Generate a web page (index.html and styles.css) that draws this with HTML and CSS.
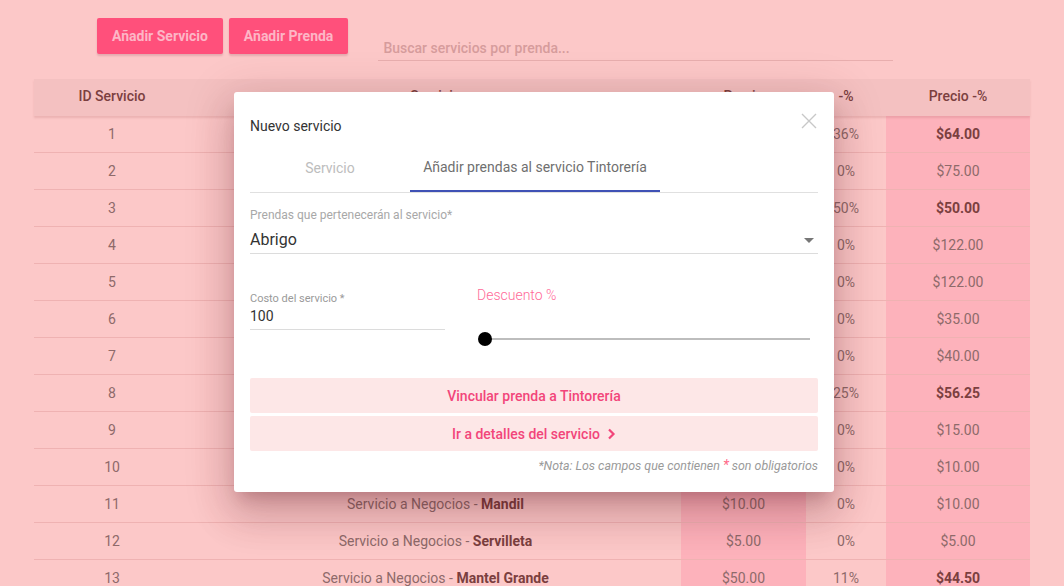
FILE: index.html
```html
<!DOCTYPE html>
<html lang="es">
<head>
<meta charset="utf-8">
<title>Servicios</title>
<link rel="stylesheet" href="styles.css">
</head>
<body>
<div class="page">
  <div class="toolbar">
    <button class="btn-add">Añadir Servicio</button>
    <button class="btn-add">Añadir Prenda</button>
    <div class="search"><span class="placeholder">Buscar servicios por prenda...</span></div>
  </div>
  <div class="table">
    <div class="row head">
      <div class="c c-id">ID Servicio</div>
      <div class="c c-srv">Servicio</div>
      <div class="c c-pr">Precio</div>
      <div class="c c-pc">-%</div>
      <div class="c c-fin">Precio -%</div>
    </div>
    <div class="row"><div class="c c-id">1</div><div class="c c-srv">Tintorería - <b>Traje</b></div><div class="c c-pr hl">$100.00</div><div class="c c-pc">36%</div><div class="c c-fin hl"><b>$64.00</b></div></div>
    <div class="row"><div class="c c-id">2</div><div class="c c-srv">Tintorería - <b>Vestido</b></div><div class="c c-pr hl">$75.00</div><div class="c c-pc">0%</div><div class="c c-fin hl">$75.00</div></div>
    <div class="row"><div class="c c-id">3</div><div class="c c-srv">Tintorería - <b>Abrigo</b></div><div class="c c-pr hl">$100.00</div><div class="c c-pc">50%</div><div class="c c-fin hl"><b>$50.00</b></div></div>
    <div class="row"><div class="c c-id">4</div><div class="c c-srv">Lavandería - <b>Edredón</b></div><div class="c c-pr hl">$122.00</div><div class="c c-pc">0%</div><div class="c c-fin hl">$122.00</div></div>
    <div class="row"><div class="c c-id">5</div><div class="c c-srv">Lavandería - <b>Cobertor</b></div><div class="c c-pr hl">$122.00</div><div class="c c-pc">0%</div><div class="c c-fin hl">$122.00</div></div>
    <div class="row"><div class="c c-id">6</div><div class="c c-srv">Planchado - <b>Camisa</b></div><div class="c c-pr hl">$35.00</div><div class="c c-pc">0%</div><div class="c c-fin hl">$35.00</div></div>
    <div class="row"><div class="c c-id">7</div><div class="c c-srv">Planchado - <b>Pantalón</b></div><div class="c c-pr hl">$40.00</div><div class="c c-pc">0%</div><div class="c c-fin hl">$40.00</div></div>
    <div class="row"><div class="c c-id">8</div><div class="c c-srv">Tintorería - <b>Saco</b></div><div class="c c-pr hl">$75.00</div><div class="c c-pc">25%</div><div class="c c-fin hl"><b>$56.25</b></div></div>
    <div class="row"><div class="c c-id">9</div><div class="c c-srv">Servicio a Negocios - <b>Mantel</b></div><div class="c c-pr hl">$15.00</div><div class="c c-pc">0%</div><div class="c c-fin hl">$15.00</div></div>
    <div class="row"><div class="c c-id">10</div><div class="c c-srv">Servicio a Negocios - <b>Toalla</b></div><div class="c c-pr hl">$10.00</div><div class="c c-pc">0%</div><div class="c c-fin hl">$10.00</div></div>
    <div class="row"><div class="c c-id">11</div><div class="c c-srv">Servicio a Negocios - <b>Mandil</b></div><div class="c c-pr hl">$10.00</div><div class="c c-pc">0%</div><div class="c c-fin hl">$10.00</div></div>
    <div class="row"><div class="c c-id">12</div><div class="c c-srv">Servicio a Negocios - <b>Servilleta</b></div><div class="c c-pr hl">$5.00</div><div class="c c-pc">0%</div><div class="c c-fin hl">$5.00</div></div>
    <div class="row"><div class="c c-id">13</div><div class="c c-srv">Servicio a Negocios - <b>Mantel Grande</b></div><div class="c c-pr hl">$50.00</div><div class="c c-pc">11%</div><div class="c c-fin hl"><b>$44.50</b></div></div>
  </div>
</div>

<div class="dialog">
  <div class="dlg-head">
    <span class="dlg-title">Nuevo servicio</span>
    <svg class="close" width="16" height="16" viewBox="0 0 16 16"><path d="M1 1 L15 15 M15 1 L1 15" stroke="#c8c8c8" stroke-width="1.4" fill="none"/></svg>
  </div>
  <div class="tabs">
    <div class="tab tab-off">Servicio</div>
    <div class="tab tab-on">Añadir prendas al servicio Tintorería</div>
  </div>
  <div class="field select">
    <div class="label">Prendas que pertenecerán al servicio*</div>
    <div class="value-row"><span class="value">Abrigo</span><span class="arrow"></span></div>
  </div>
  <div class="cost-row">
    <div class="field cost">
      <div class="label small">Costo del servicio *</div>
      <div class="value num">100</div>
    </div>
    <div class="discount">
      <div class="disc-label">Descuento %</div>
      <div class="slider"><span class="thumb"></span></div>
    </div>
  </div>
  <div class="actions">
    <button class="act">Vincular prenda a Tintorería</button>
    <button class="act">Ir a detalles del servicio <svg class="chev" width="10" height="12" viewBox="0 0 10 12"><path d="M3 1.5 L7.5 6 L3 10.5" stroke="#f2457a" stroke-width="2.2" fill="none"/></svg></button>
  </div>
  <div class="note">*Nota: Los campos que contienen <span class="ast">*</span> son obligatorios</div>
</div>
</body>
</html>
```
FILE: styles.css
```css
* { box-sizing: border-box; }
html, body { margin: 0; padding: 0; }
body {
  background: #fcc8c8;
  font-family: Roboto, "Liberation Sans", Arial, sans-serif;
  width: 1064px;
  height: 586px;
  overflow: hidden;
}
.page { padding-top: 18px; }
.toolbar {
  display: flex;
  align-items: flex-start;
  padding-left: 97px;
  height: 61px;
}
.btn-add {
  height: 36px;
  border: none;
  border-radius: 2px;
  background: #ff507b;
  color: #fdb6c6;
  font-family: Roboto, sans-serif;
  font-weight: 700;
  font-size: 14px;
  padding: 0 15px;
  margin-right: 6px;
  box-shadow: 0 2px 2px rgba(120, 40, 60, .18);
}
.search {
  margin-left: 24px;
  margin-top: 20px;
  width: 515px;
  height: 23px;
  border-bottom: 1px solid #e8aeae;
  padding-left: 5px;
}
.placeholder {
  color: #d69c9c;
  font-size: 14px;
  line-height: 20px;
  font-weight: 500;
}
.table {
  margin-left: 34px;
  width: 996px;
}
.row {
  display: flex;
  height: 37px;
  border-bottom: 1px solid #efb2b2;
}
.row.head {
  background: #f4c1c1;
  border-bottom: none;
  padding-bottom: 3px;
  box-shadow: 0 2px 2px rgba(160, 80, 80, .18);
  position: relative;
  z-index: 1;
}
.c {
  display: flex;
  align-items: center;
  justify-content: center;
  font-size: 14px;
  color: #8e6a6a;
}
.head .c { color: #7b3f3f; font-weight: 500; }
.c b { color: #7b3f3f; font-weight: 700; }
.c-id { width: 156px; }
.c-srv { width: 491px; white-space: pre; }
.c-pr { width: 125px; }
.c-pc { width: 80px; }
.c-fin { width: 144px; }
.hl { background: #fdb2bb; }
.head .hl { background: transparent; }

.dialog {
  position: absolute;
  left: 234px;
  top: 92px;
  width: 600px;
  height: 400px;
  background: #fff;
  border-radius: 3px;
  padding: 0 16px;
  box-shadow: 0 11px 15px -7px rgba(90, 20, 30, .25), 0 24px 38px 3px rgba(90, 20, 30, .16), 0 9px 46px 8px rgba(90, 20, 30, .14);
  z-index: 5;
}
.dlg-head {
  display: flex;
  justify-content: space-between;
  align-items: center;
  padding-top: 16px;
  height: 52px;
}
.dlg-title { font-size: 14px; color: #333; line-height: 20px; }
.close { margin-right: 1px; margin-top: -10px; }
.tabs {
  display: flex;
  height: 49px;
  border-bottom: 1px solid #e0e0e0;
}
.tab {
  display: flex;
  align-items: center;
  justify-content: center;
  font-size: 14px;
  height: 48px;
}
.tab-off { width: 160px; color: #bdbdbd; }
.tab-on { width: 250px; color: #6f6f6f; border-bottom: 2px solid #3f51b5; }
.field { display: flex; flex-direction: column; }
.select { padding-top: 15px; height: 61px; border-bottom: 1px solid #dcdcdc; }
.label { font-size: 12px; color: #a8a8a8; line-height: 14px; }
.value-row { display: flex; justify-content: space-between; align-items: center; margin-top: 8px; }
.value { font-size: 16px; color: #333; line-height: 20px; }
.arrow {
  width: 0; height: 0;
  border-left: 5px solid transparent;
  border-right: 5px solid transparent;
  border-top: 5px solid #777;
  margin-right: 4px;
}
.cost-row { display: flex; margin-top: 33px; height: 62px; }
.cost { width: 195px; border-bottom: 1px solid #dcdcdc; height: 43px; padding-top: 5px; }
.label.small { font-size: 11px; color: #9a9a9a; line-height: 14px; }
.num { font-size: 14px; line-height: 18px; margin-top: 1px; }
.discount { margin-left: 36px; width: 333px; }
.disc-label { font-size: 14px; color: #ff6a98; line-height: 16px; margin-left: -4px; font-weight: 300; }
.slider {
  position: relative;
  margin-top: 35px;
  margin-left: 3px;
  height: 2px;
  width: 326px;
  background: #bdbdbd;
}
.thumb {
  position: absolute;
  left: -6px;
  top: -6px;
  width: 14px;
  height: 14px;
  border-radius: 50%;
  background: #000;
}
.actions { display: flex; flex-direction: column; gap: 3px; margin-top: 29px; }
.act {
  height: 35px;
  border: none;
  border-radius: 2px;
  background: #fde7e7;
  color: #f2457a;
  font-family: Roboto, sans-serif;
  font-weight: 500;
  font-size: 14px;
  display: flex;
  align-items: center;
  justify-content: center;
  gap: 6px;
}
.chev { margin-top: 1px; }
.note {
  text-align: right;
  font-size: 12.4px;
  font-style: italic;
  color: #9a9a9a;
  margin-top: 7px;
  line-height: 14px;
}
.ast { color: #ff6a8a; font-size: 14px; }
```
